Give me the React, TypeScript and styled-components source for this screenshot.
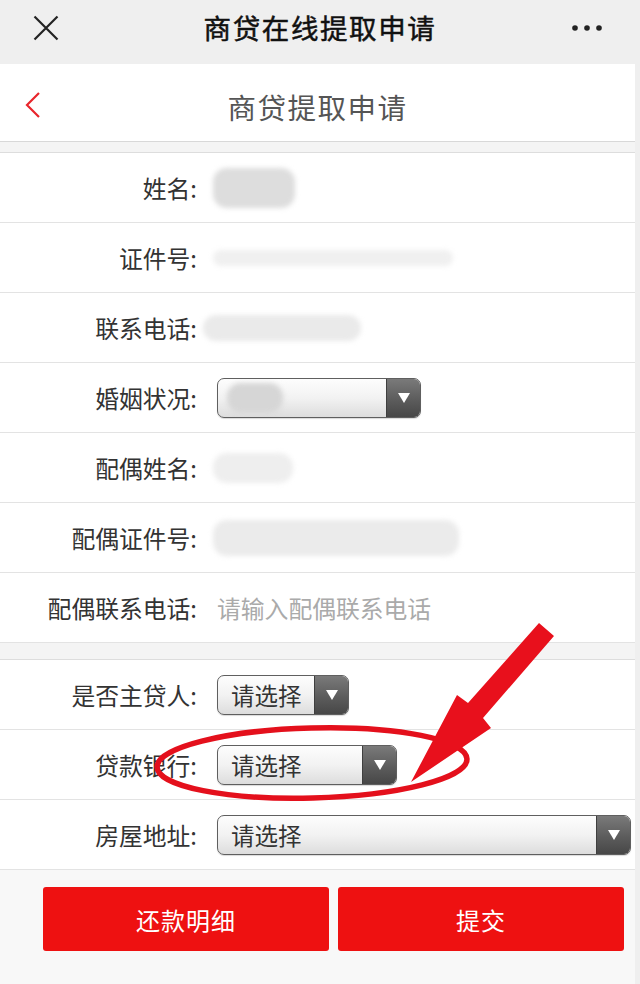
import React from "react";
import styled, { createGlobalStyle } from "styled-components";

const Global = createGlobalStyle`
  html, body { margin: 0; padding: 0; }
  body {
    background: #eeeeee;
    font-family: "Noto Sans CJK SC", "Noto Sans", sans-serif;
    -webkit-font-smoothing: antialiased;
  }
`;

const Page = styled.div`
  position: relative;
  width: 640px;
  height: 984px;
  overflow: hidden;
  background: #efefef;
`;

const TopBar = styled.header`
  height: 64px;
  display: grid;
  grid-template-columns: 92px 1fr 92px;
  align-items: center;
  background: #efefef;
`;

const TopTitle = styled.h1`
  margin: 0;
  text-align: center;
  font-size: 27.5px;
  font-weight: 400;
  color: #111;
  -webkit-text-stroke: 0.5px #111;
  letter-spacing: 1.6px;
  line-height: 1;
  padding-bottom: 8px;
`;

const IconCell = styled.div<{ $align: "start" | "end" }>`
  display: flex;
  justify-content: ${(p) => (p.$align === "start" ? "flex-start" : "flex-end")};
  padding: ${(p) => (p.$align === "start" ? "0 0 8px 33px" : "0 38px 8px 0")};
`;

const Body = styled.div`
  width: 635px;
  background: #f8f8f8;
  min-height: 920px;
`;

const NavBar = styled.nav`
  height: 77px;
  display: grid;
  grid-template-columns: 60px 1fr 60px;
  align-items: center;
  background: #fff;
  border-bottom: 1px solid #d8d8d8;
`;

const NavTitle = styled.div`
  text-align: center;
  font-size: 28.5px;
  color: #555;
  letter-spacing: 1.5px;
  padding-top: 8px;
`;

const BackCell = styled.div`
  padding: 10px 0 0 25px;
`;

const Gap = styled.div<{ $h: number }>`
  height: ${(p) => p.$h}px;
  background: #f4f4f4;
  border-bottom: 1px solid #dddddd;
`;

const Row = styled.div`
  height: 69px;
  display: grid;
  grid-template-columns: 197px 1fr;
  column-gap: 20px;
  align-items: center;
  background: #fff;
  border-bottom: 1px solid #e3e3e3;
`;

const Label = styled.div`
  text-align: right;
  font-size: 23.8px;
  color: #333;
  white-space: nowrap;
`;

const Value = styled.div`
  display: flex;
  align-items: center;
  min-width: 0;
`;

const Blur = styled.div<{ $w: number; $h: number; $shade: string; $dx?: number }>`
  width: ${(p) => p.$w}px;
  height: ${(p) => p.$h}px;
  margin-left: ${(p) => p.$dx ?? 0}px;
  background: ${(p) => p.$shade};
  border-radius: ${(p) => Math.min(p.$h / 2, 14)}px;
  filter: blur(2.5px);
`;

const Placeholder = styled.div`
  font-size: 23.8px;
  color: #aaa;
  white-space: nowrap;
`;

const Select = styled.div<{ $w: number }>`
  width: ${(p) => p.$w}px;
  height: 40px;
  box-sizing: border-box;
  display: flex;
  border: 1.5px solid #5f5f5f;
  border-radius: 7px;
  overflow: hidden;
  background: linear-gradient(#fdfdfd 0%, #f2f2f2 50%, #dddddd 100%);
  box-shadow: 0 1px 1px rgba(0, 0, 0, 0.15);
`;

const SelectText = styled.div`
  flex: 1;
  display: flex;
  align-items: center;
  padding-left: 13px;
  font-size: 23.5px;
  color: #333;
  white-space: nowrap;
`;

const SelectArrow = styled.div`
  width: 33px;
  display: flex;
  align-items: center;
  justify-content: center;
  background: linear-gradient(#7a7a7a 0%, #5c5c5c 55%, #474747 100%);
  border-left: 1px solid #3f3f3f;
  &::after {
    content: "";
    width: 0;
    height: 0;
    border-left: 6px solid transparent;
    border-right: 6px solid transparent;
    border-top: 10px solid #fff;
  }
`;

const Footer = styled.div`
  display: grid;
  grid-template-columns: 286px 286px;
  column-gap: 9px;
  padding: 17px 11px 30px 43px;
  background: #f8f8f8;
`;

const Button = styled.button`
  height: 64px;
  border: none;
  border-radius: 3px;
  background: #ee1111;
  color: #fff;
  font-family: inherit;
  font-size: 24px;
  letter-spacing: 1px;
  cursor: pointer;
`;

const Overlay = styled.svg`
  position: absolute;
  left: 0;
  top: 0;
  pointer-events: none;
`;

const CloseIcon = () => (
  <svg width="26" height="26" viewBox="0 0 26 26">
    <path d="M1.5 1.5 L24.5 24.5 M24.5 1.5 L1.5 24.5" stroke="#222" strokeWidth="2.2" fill="none" />
  </svg>
);

const MoreIcon = () => (
  <svg width="30" height="8" viewBox="0 0 30 8">
    <circle cx="3" cy="4" r="2.8" fill="#222" />
    <circle cx="15" cy="4" r="2.8" fill="#222" />
    <circle cx="27" cy="4" r="2.8" fill="#222" />
  </svg>
);

const BackIcon = () => (
  <svg width="16" height="26" viewBox="0 0 16 26">
    <path d="M14 1 L2 13 L14 25" stroke="#e8262c" strokeWidth="2.2" fill="none" />
  </svg>
);

type Field =
  | { label: string; kind: "blur"; w: number; h: number; shade: string; dx?: number }
  | { label: string; kind: "placeholder"; text: string }
  | { label: string; kind: "select"; w: number; text?: string; blur?: boolean };

const personal: Field[] = [
  { label: "姓名:", kind: "blur", w: 82, h: 40, shade: "#dddddd", dx: -4 },
  { label: "证件号:", kind: "blur", w: 240, h: 16, shade: "#f0f0f0", dx: -4 },
  { label: "联系电话:", kind: "blur", w: 158, h: 26, shade: "#eaeaea", dx: -14 },
  { label: "婚姻状况:", kind: "select", w: 204, blur: true },
  { label: "配偶姓名:", kind: "blur", w: 80, h: 30, shade: "#eeeeee", dx: -4 },
  { label: "配偶证件号:", kind: "blur", w: 246, h: 36, shade: "#ebebeb", dx: -4 },
  { label: "配偶联系电话:", kind: "placeholder", text: "请输入配偶联系电话" },
];

const loan: Field[] = [
  { label: "是否主贷人:", kind: "select", w: 132, text: "请选择" },
  { label: "贷款银行:", kind: "select", w: 180, text: "请选择" },
  { label: "房屋地址:", kind: "select", w: 414, text: "请选择" },
];

const renderValue = (f: Field) => {
  if (f.kind === "blur") return <Blur $w={f.w} $h={f.h} $shade={f.shade} $dx={f.dx} />;
  if (f.kind === "placeholder") return <Placeholder>{f.text}</Placeholder>;
  return (
    <Select $w={f.w}>
      <SelectText>
        {f.blur ? <Blur $w={56} $h={30} $shade="#d6d6d6" $dx={-4} /> : f.text}
      </SelectText>
      <SelectArrow />
    </Select>
  );
};

export default function App() {
  return (
    <>
      <Global />
      <Page>
        <TopBar>
          <IconCell $align="start">
            <CloseIcon />
          </IconCell>
          <TopTitle>商贷在线提取申请</TopTitle>
          <IconCell $align="end">
            <MoreIcon />
          </IconCell>
        </TopBar>
        <Body>
          <NavBar>
            <BackCell>
              <BackIcon />
            </BackCell>
            <NavTitle>商贷提取申请</NavTitle>
            <div />
          </NavBar>
          <Gap $h={10} />
          {personal.map((f) => (
            <Row key={f.label}>
              <Label>{f.label}</Label>
              <Value>{renderValue(f)}</Value>
            </Row>
          ))}
          <Gap $h={16} />
          {loan.map((f) => (
            <Row key={f.label}>
              <Label>{f.label}</Label>
              <Value>{renderValue(f)}</Value>
            </Row>
          ))}
          <Footer>
            <Button>还款明细</Button>
            <Button>提交</Button>
          </Footer>
        </Body>
        <Overlay width="640" height="984" viewBox="0 0 640 984">
          <ellipse
            cx="312"
            cy="763"
            rx="155"
            ry="35"
            transform="rotate(-1.5 312 763)"
            fill="none"
            stroke="#e4101c"
            strokeWidth="5.5"
          />
          <polygon
            points="539,623 554,636 483,718 491,728 411,782 457,695 468,703"
            fill="#e8101c"
          />
        </Overlay>
      </Page>
    </>
  );
}
